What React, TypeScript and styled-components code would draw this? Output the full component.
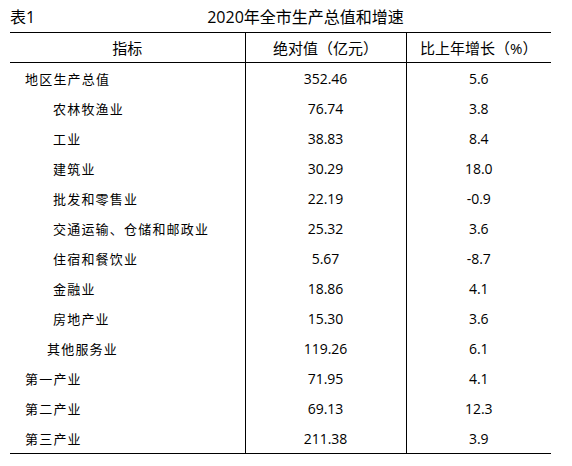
import React from 'react'
import styled, { createGlobalStyle } from 'styled-components'

const GlobalStyle = createGlobalStyle`
  body {
    margin: 0;
    background: #fff;
    color: #000;
    font-family: "Open Sans", "Noto Sans CJK SC", sans-serif;
  }
`

const Page = styled.div`
  width: 541px;
  padding-left: 10px;
`

const TitleBar = styled.div`
  display: flex;
  align-items: center;
  height: 32px;
  font-size: 16px;
`

const TableNo = styled.span`
  width: 40px;
`

const Title = styled.span`
  flex: 1;
  text-align: center;
  padding-left: 10px;
`

const Table = styled.table`
  width: 541px;
  table-layout: fixed;
  border-collapse: collapse;
  border-top: 1px solid #000;
  border-bottom: 1px solid #000;
`

const HeadCell = styled.th`
  height: 29px;
  padding: 0;
  font-size: 15px;
  font-weight: normal;
  text-align: center;
  border-bottom: 1px solid #000;

  & + & {
    border-left: 1px solid #000;
  }
`

const Cell = styled.td`
  height: 30px;
  padding: 0;
  font-size: 14px;
  text-align: center;

  & + & {
    border-left: 1px solid #000;
  }
`

const LabelCell = styled(Cell)<{ $indent: number }>`
  text-align: left;
  padding-left: ${p => p.$indent}px;
  font-family: "Noto Sans CJK SC", sans-serif;
  font-size: 13px;
  letter-spacing: 1.2px;
`

type Row = { name: string; indent: number; value: string; growth: string }

const rows: Row[] = [
  { name: '地区生产总值', indent: 15, value: '352.46', growth: '5.6' },
  { name: '农林牧渔业', indent: 43, value: '76.74', growth: '3.8' },
  { name: '工业', indent: 43, value: '38.83', growth: '8.4' },
  { name: '建筑业', indent: 43, value: '30.29', growth: '18.0' },
  { name: '批发和零售业', indent: 43, value: '22.19', growth: '-0.9' },
  { name: '交通运输、仓储和邮政业', indent: 43, value: '25.32', growth: '3.6' },
  { name: '住宿和餐饮业', indent: 43, value: '5.67', growth: '-8.7' },
  { name: '金融业', indent: 43, value: '18.86', growth: '4.1' },
  { name: '房地产业', indent: 43, value: '15.30', growth: '3.6' },
  { name: '其他服务业', indent: 37, value: '119.26', growth: '6.1' },
  { name: '第一产业', indent: 15, value: '71.95', growth: '4.1' },
  { name: '第二产业', indent: 15, value: '69.13', growth: '12.3' },
  { name: '第三产业', indent: 15, value: '211.38', growth: '3.9' },
]

const App = () => {
  return (
    <Page>
      <GlobalStyle />
      <TitleBar>
        <TableNo>表1</TableNo>
        <Title>2020年全市生产总值和增速</Title>
      </TitleBar>
      <Table>
        <colgroup>
          <col style={{ width: 235 }} />
          <col style={{ width: 161 }} />
          <col style={{ width: 145 }} />
        </colgroup>
        <thead>
          <tr>
            <HeadCell>指标</HeadCell>
            <HeadCell>绝对值（亿元）</HeadCell>
            <HeadCell>比上年增长（%）</HeadCell>
          </tr>
        </thead>
        <tbody>
          {rows.map(row => (
            <tr key={row.name}>
              <LabelCell $indent={row.indent}>{row.name}</LabelCell>
              <Cell>{row.value}</Cell>
              <Cell>{row.growth}</Cell>
            </tr>
          ))}
        </tbody>
      </Table>
    </Page>
  )
}

export default App
